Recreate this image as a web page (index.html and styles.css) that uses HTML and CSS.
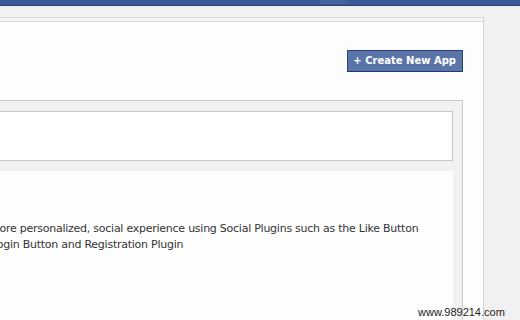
FILE: index.html
```html
<!DOCTYPE html>
<html lang="en">
<head>
<meta charset="utf-8">
<title>Apps</title>
<link rel="stylesheet" href="styles.css">
</head>
<body>
<div class="topbar"><span class="nav-tab"></span></div>
<div class="page">
  <div class="panel">
    <div class="panel-cap"></div>
    <div class="toolbar">
      <button class="btn-create" type="button">+ Create New App</button>
    </div>
    <div class="box">
      <div class="field"></div>
      <div class="content">
        <p class="desc">more personalized, social experience using Social Plugins such as the Like Button<br>Login Button and Registration Plugin</p>
      </div>
    </div>
  </div>
</div>
<div class="watermark">www.989214.com</div>
</body>
</html>
```
FILE: styles.css
```css
html, body {
  margin: 0;
  padding: 0;
  height: 100%;
  overflow: hidden;
}
body {
  background: #f2f1f1;
  font-family: "DejaVu Sans", sans-serif;
  position: relative;
}
.topbar {
  height: 5px;
  background: #3b5998;
  border-bottom: 1px solid #233f78;
  display: flex;
}
.nav-tab {
  margin-left: 320px;
  width: 27px;
  height: 4px;
  background: #4561a0;
}
.page {
  padding-top: 11px;
  display: flex;
}
.panel {
  width: 484px;
  box-sizing: border-box;
  background: #fdfdfd;
  border-right: 1px solid #d2d2d2;
  padding-right: 20px;
  height: 320px;
}
.panel-cap {
  height: 3px;
  background: #f4f4f4;
  border-top: 1px solid #dcdcdc;
  border-bottom: 1px solid #dcdcdc;
  margin-right: -20px;
}
.toolbar {
  display: flex;
  justify-content: flex-end;
  padding-top: 28px;
}
.btn-create {
  font-family: "DejaVu Sans", sans-serif;
  font-weight: bold;
  font-size: 10px;
  line-height: 20px;
  height: 22px;
  color: #ffffff;
  background: #5b74a8;
  border: 1px solid #29447e;
  border-bottom-color: #1f3a72;
  padding: 0 6px 0 5px;
  margin: 0;
  box-sizing: border-box;
}
.box {
  margin-top: 28px;
  margin-left: -20px;
  border: 1px solid #c9c9c9;
  background: #f1f1f1;
  padding: 10px 9px 0 10px;
  height: 300px;
}
.field {
  height: 48px;
  background: #ffffff;
  border: 1px solid #c8c8c8;
}
.content {
  margin-top: 10px;
  background: #fefefe;
  height: 200px;
  padding: 50px 0 0 0;
}
.desc {
  margin: 0;
  font-size: 11px;
  line-height: 16px;
  letter-spacing: -0.25px;
  text-indent: -2px;
  color: #333333;
  white-space: nowrap;
}
.watermark {
  position: absolute;
  left: 418px;
  top: 306px;
  font-family: "Liberation Sans", Arial, sans-serif;
  font-size: 11px;
  line-height: 13px;
  color: #1a1a1a;
}
```
